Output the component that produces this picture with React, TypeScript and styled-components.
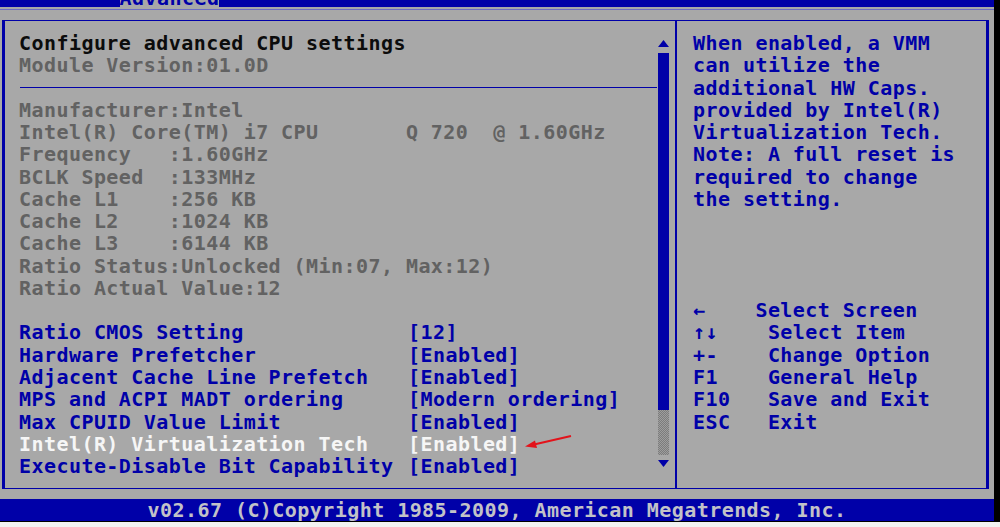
import * as React from 'react'
import styled, { createGlobalStyle } from 'styled-components'

const LH = 22.27
const BLUE = '#0000a8'
const GRAY = '#a8a8a8'

const GlobalStyle = createGlobalStyle`
  html, body {
    margin: 0;
    padding: 0;
    background: #f2f2f2;
  }
  body {
    font-family: "DejaVu Sans Mono", "Liberation Mono", monospace;
  }
`

const Frame = styled.div`
  width: 1000px;
  height: 522px;
  background: #000;
  display: flex;
  align-items: flex-start;
`

const Screen = styled.div`
  width: 994px;
  height: 521px;
  background: ${GRAY};
  display: flex;
  flex-direction: column;
  font-family: "DejaVu Sans Mono", "Liberation Mono", monospace;
  font-weight: 700;
  font-size: 20px;
  letter-spacing: 0.44px;
  line-height: ${LH}px;
`

const TopBar = styled.div`
  height: 7px;
  background: ${BLUE};
  display: flex;
  flex-shrink: 0;
`

const Tab = styled.div`
  margin-left: 120px;
  width: 99px;
  height: 7px;
  background: ${GRAY};
  color: ${BLUE};
  overflow: hidden;
  display: flex;
  align-items: flex-end;
  justify-content: center;
  span {
    margin-bottom: -2px;
  }
`

const TopRule = styled.div`
  height: 1px;
  margin-top: 2px;
  background: #6c6cc4;
  flex-shrink: 0;
`

const Box = styled.div`
  margin: 10px 5px 0 2px;
  height: 467px;
  border-style: solid;
  border-color: ${BLUE};
  border-width: 1px 3px;
  display: flex;
  flex-shrink: 0;
`

const LeftPanel = styled.div`
  width: 670px;
  display: flex;
  padding-left: 14px;
  box-sizing: border-box;
`

const Content = styled.div`
  flex: 1;
  padding-top: 11px;
  display: flex;
  flex-direction: column;
`

const Line = styled.div<{ $tone?: 'title' | 'info' | 'menu' | 'active' }>`
  height: ${LH}px;
  white-space: pre;
  display: flex;
  align-items: center;
  color: ${({ $tone }) =>
    $tone === 'title'
      ? '#0c0c0c'
      : $tone === 'menu'
      ? BLUE
      : $tone === 'active'
      ? '#f6f6f6'
      : '#626262'};
`

const Separator = styled.div`
  height: ${LH}px;
  display: flex;
  align-items: center;
  padding-left: 1px;
  &::after {
    content: '';
    flex: 1;
    height: 1px;
    background: ${BLUE};
  }
`

const Blank = styled.div`
  height: ${LH}px;
`

const Label = styled.span`
  width: 389px;
`

const Scroll = styled.div`
  width: 12px;
  margin-right: 6px;
  display: flex;
  flex-direction: column;
  align-items: center;
  padding-top: 19px;
`

const Arrow = styled.svg`
  display: block;
  flex-shrink: 0;
`

const Track = styled.div`
  width: 11px;
  height: 402px;
  margin: 6px 0 5px;
  display: flex;
  flex-direction: column;
`

const Thumb = styled.div`
  height: 357px;
  background: ${BLUE};
`

const Rest = styled.div`
  flex: 1;
  background: repeating-conic-gradient(#7c7c7c 0 25%, #9e9e9e 0 50%) 0 0 / 2px 2px;
`

const Divider = styled.div`
  width: 2px;
  background: ${BLUE};
`

const RightPanel = styled.div`
  flex: 1;
  padding: 11px 0 0 16px;
  color: ${BLUE};
  display: flex;
  flex-direction: column;
`

const Keys = styled.div`
  margin-top: ${LH * 4}px;
`

const Footer = styled.div`
  margin-top: 10px;
  height: 22px;
  background: ${BLUE};
  color: #c2c2c8;
  display: flex;
  align-items: center;
  justify-content: center;
  white-space: pre;
  flex-shrink: 0;
`

const info = [
  'Manufacturer:Intel',
  'Intel(R) Core(TM) i7 CPU       Q 720  @ 1.60GHz',
  'Frequency   :1.60GHz',
  'BCLK Speed  :133MHz',
  'Cache L1    :256 KB',
  'Cache L2    :1024 KB',
  'Cache L3    :6144 KB',
  'Ratio Status:Unlocked (Min:07, Max:12)',
  'Ratio Actual Value:12'
]

const menu = [
  ['Ratio CMOS Setting', '[12]'],
  ['Hardware Prefetcher', '[Enabled]'],
  ['Adjacent Cache Line Prefetch', '[Enabled]'],
  ['MPS and ACPI MADT ordering', '[Modern ordering]'],
  ['Max CPUID Value Limit', '[Enabled]'],
  ['Intel(R) Virtualization Tech', '[Enabled]'],
  ['Execute-Disable Bit Capability', '[Enabled]']
]

const help = [
  'When enabled, a VMM',
  'can utilize the',
  'additional HW Caps.',
  'provided by Intel(R)',
  'Virtualization Tech.',
  'Note: A full reset is',
  'required to change',
  'the setting.'
]

const keys = [
  '\u2190    Select Screen',
  '\u2191\u2193    Select Item',
  '+-    Change Option',
  'F1    General Help',
  'F10   Save and Exit',
  'ESC   Exit'
]

function Pointer() {
  return (
    <Arrow width="50" height="20" viewBox="0 0 50 20" style={{ marginLeft: 4 }}>
      <line x1="47" y1="2" x2="10" y2="10.5" stroke="#e3131b" strokeWidth="2" />
      <polygon points="1,12.5 11,6.5 13,14" fill="#e3131b" />
    </Arrow>
  )
}

function ScrollBar() {
  return (
    <Scroll>
      <Arrow width="11" height="7" viewBox="0 0 11 7">
        <polygon points="5.5,0 11,7 0,7" fill={BLUE} />
      </Arrow>
      <Track>
        <Thumb />
        <Rest />
      </Track>
      <Arrow width="11" height="7" viewBox="0 0 11 7">
        <polygon points="0,0 11,0 5.5,7" fill={BLUE} />
      </Arrow>
    </Scroll>
  )
}

export default function App() {
  return (
    <>
      <GlobalStyle />
      <Frame>
        <Screen>
          <TopBar>
            <Tab>
              <span>Advanced</span>
            </Tab>
          </TopBar>
          <TopRule />
          <Box>
            <LeftPanel>
              <Content>
                <Line $tone="title">Configure advanced CPU settings</Line>
                <Line>Module Version:01.0D</Line>
                <Separator />
                {info.map((text, i) => (
                  <Line key={i}>{text}</Line>
                ))}
                <Blank />
                {menu.map(([label, value], i) => {
                  const active = i === 5
                  return (
                    <Line key={i} $tone={active ? 'active' : 'menu'}>
                      <Label>{label}</Label>
                      <span>{value}</span>
                      {active && <Pointer />}
                    </Line>
                  )
                })}
              </Content>
              <ScrollBar />
            </LeftPanel>
            <Divider />
            <RightPanel>
              <div>
                {help.map((text, i) => (
                  <Line key={i} $tone="menu">
                    {text}
                  </Line>
                ))}
              </div>
              <Keys>
                {keys.map((text, i) => (
                  <Line key={i} $tone="menu">
                    {text}
                  </Line>
                ))}
              </Keys>
            </RightPanel>
          </Box>
          <Footer>v02.67 (C)Copyright 1985-2009, American Megatrends, Inc.</Footer>
        </Screen>
      </Frame>
    </>
  )
}
